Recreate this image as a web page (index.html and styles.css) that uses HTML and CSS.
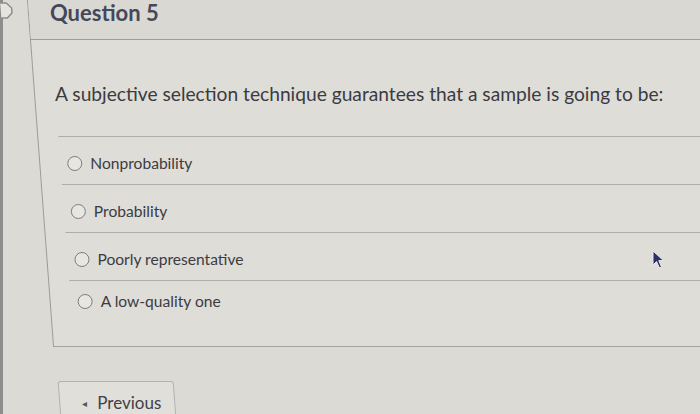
FILE: index.html
```html
<!DOCTYPE html>
<html lang="en">
<head>
<meta charset="utf-8">
<title>Question 5</title>
<link rel="stylesheet" href="styles.css">
</head>
<body>
<div class="screen">
  <aside class="rail">
    <svg class="rail-icon" width="14" height="20" viewBox="0 0 14 20" aria-hidden="true">
      <path d="M-4 3 H6 L11 8 V13 L6 18 H-4 Z" fill="#e6e4df" stroke="#8d8d8f" stroke-width="1.5" stroke-linejoin="round"/>
    </svg>
  </aside>
  <main class="main">
    <section class="card">
      <header class="card-header">
        <h2 class="title upright">Question 5</h2>
      </header>
      <div class="card-body">
        <div class="question"><span class="upright">A subjective selection technique guarantees that a sample is going to be:</span></div>
        <ul class="answers">
          <li class="answer"><label class="choice upright"><span class="radio"></span>Nonprobability</label></li>
          <li class="answer"><label class="choice upright"><span class="radio"></span>Probability</label></li>
          <li class="answer"><label class="choice upright"><span class="radio"></span>Poorly representative</label></li>
          <li class="answer"><label class="choice upright"><span class="radio"></span>A low-quality one</label></li>
        </ul>
      </div>
    </section>
    <nav class="nav">
      <button class="btn" type="button"><span class="upright btn-inner"><span class="caret">&#9666;</span>Previous</span></button>
    </nav>
  </main>
</div>
<svg class="cursor" width="14" height="20" viewBox="0 0 14 20" aria-hidden="true">
  <path d="M1 1 L1 15 L4.5 11.5 L7.5 18 L9.5 17 L6.8 10.6 L11.5 10.6 Z" fill="#2c3160" stroke="#e8e8ee" stroke-width="1" stroke-linejoin="round"/>
</svg>
</body>
</html>
```

FILE: styles.css
```css
html, body {
  margin: 0;
  padding: 0;
  width: 700px;
  height: 414px;
  overflow: hidden;
  background: #dcdad5;
  font-family: Lato, "Open Sans", "Liberation Sans", sans-serif;
  color: #3b3c42;
}

body {
  box-shadow: inset 3px 0 0 #8e8d8b;
}

.screen {
  display: flex;
  width: 760px;
  height: 470px;
  transform: skewX(4.3deg);
  transform-origin: 0 0;
}

.upright {
  display: inline-block;
  transform: skewX(-4.3deg);
}

.rail {
  width: 27px;
  flex: none;
  overflow: hidden;
}

.rail-icon {
  display: block;
}

.main {
  flex: 1;
  display: flex;
  flex-direction: column;
}

.card {
  border-left: 1px solid #9c9b98;
  border-bottom: 1px solid #a3a29f;
  background: #dfddd8;
}

.card-header {
  height: 40px;
  box-sizing: border-box;
  padding: 1px 0 0 21px;
  background: #dad8d3;
  border-bottom: 1px solid #9e9d9a;
}

.title {
  margin: 0;
  font-size: 22px;
  line-height: 23px;
  font-weight: 700;
  color: #45485a;
}

.card-body {
  padding: 0 0 25px 20px;
}

.question {
  padding: 42px 0 30px;
  font-size: 19.2px;
  line-height: 24px;
  color: #3a3b40;
  border-bottom: 1px solid #aeadaa;
}

.answers {
  list-style: none;
  margin: 0;
  padding: 0;
}

.answer {
  height: 48px;
  box-sizing: border-box;
  padding: 4px 0 0 7px;
  display: flex;
  align-items: center;
  border-bottom: 1px solid #aeadaa;
}

.answer:last-child {
  height: 40px;
  padding-top: 0;
  border-bottom: none;
}

.choice {
  display: inline-flex;
  align-items: center;
  font-size: 15.6px;
  line-height: 20px;
  color: #3b3c42;
}

.radio {
  width: 15px;
  height: 15px;
  box-sizing: border-box;
  border: 1.5px solid #7c7c7e;
  border-radius: 50%;
  background: #e8e6e1;
  margin-right: 8px;
}

.nav {
  padding: 34px 0 0 2px;
}

.btn {
  width: 116px;
  height: 44px;
  box-sizing: border-box;
  padding: 11px 0 0 22px;
  display: flex;
  align-items: flex-start;
  border: 1px solid #b3b2af;
  border-radius: 3px;
  background: #e1dfda;
  font-family: Lato, "Open Sans", "Liberation Sans", sans-serif;
  font-size: 17px;
  line-height: 20px;
  color: #3f4048;
}

.btn-inner {
  display: inline-flex;
  align-items: center;
}

.caret {
  font-size: 10px;
  color: #55565c;
  margin-right: 10px;
}

.cursor {
  position: absolute;
  left: 652px;
  top: 250px;
}
```
